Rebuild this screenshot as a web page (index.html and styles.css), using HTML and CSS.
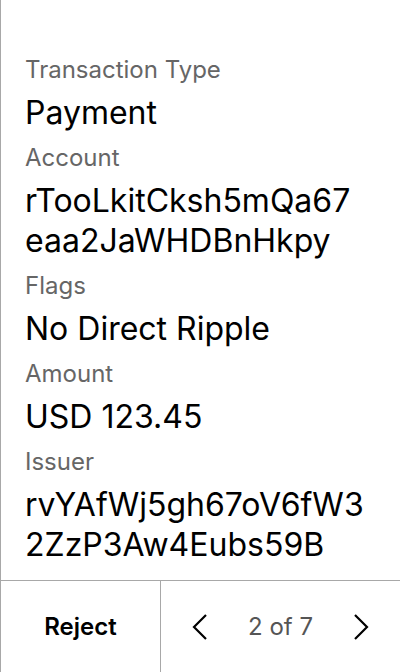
FILE: index.html
```html
<!DOCTYPE html>
<html>
<head>
<meta charset="utf-8">
<link rel="stylesheet" href="styles.css">
</head>
<body>
<div class="screen">
  <div class="content">
    <div class="field">
      <div class="label">Transaction Type</div>
      <div class="value">Payment</div>
    </div>
    <div class="field">
      <div class="label">Account</div>
      <div class="value">rTooLkitCksh5mQa67<br>eaa2JaWHDBnHkpy</div>
    </div>
    <div class="field">
      <div class="label">Flags</div>
      <div class="value">No Direct Ripple</div>
    </div>
    <div class="field">
      <div class="label">Amount</div>
      <div class="value">USD 123.45</div>
    </div>
    <div class="field">
      <div class="label">Issuer</div>
      <div class="value">rvYAfWj5gh67oV6fW3<br>2ZzP3Aw4Eubs59B</div>
    </div>
  </div>
  <div class="footer">
    <div class="reject">Reject</div>
    <div class="nav">
      <svg class="chev" width="16" height="26" viewBox="0 0 16 26"><path d="M14 1 L2 13 L14 25" fill="none" stroke="#000" stroke-width="2.2"/></svg>
      <span class="page">2 of 7</span>
      <svg class="chev" width="16" height="26" viewBox="0 0 16 26"><path d="M2 1 L14 13 L2 25" fill="none" stroke="#000" stroke-width="2.2"/></svg>
    </div>
  </div>
</div>
</body>
</html>
```
FILE: styles.css
```css
html, body {
  margin: 0;
  padding: 0;
  background: #fff;
}
body {
  font-family: Inter, "Noto Sans", sans-serif;
  color: #000;
}
.screen {
  width: 400px;
  height: 672px;
  box-sizing: border-box;
  border-left: 1px solid #a8a8a8;
  display: flex;
  flex-direction: column;
}
.content {
  flex: 1;
  padding: 56px 16px 0 24px;
  display: flex;
  flex-direction: column;
  gap: 11px;
}
.field {
  display: flex;
  flex-direction: column;
  gap: 9px;
}
.label {
  font-size: 24px;
  line-height: 28px;
  color: #666;
}
.value {
  font-size: 32px;
  line-height: 40px;
  word-break: break-all;
}
.footer {
  height: 92px;
  border-top: 1px solid #a8a8a8;
  display: flex;
  box-sizing: border-box;
}
.reject {
  width: 159px;
  border-right: 1px solid #a8a8a8;
  display: flex;
  align-items: center;
  justify-content: center;
  font-size: 24px;
  font-weight: 600;
}
.nav {
  flex: 1;
  display: flex;
  align-items: center;
  justify-content: space-between;
  padding: 0 31px;
}
.page {
  font-size: 24px;
  color: #555;
}
```
